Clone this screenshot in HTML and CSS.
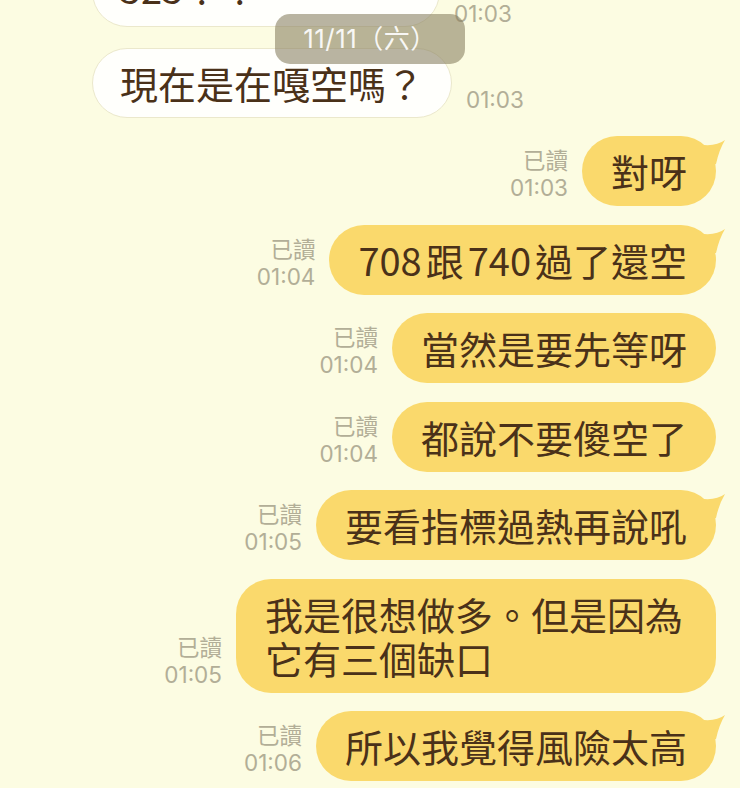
FILE: index.html
```html
<!DOCTYPE html>
<html lang="zh-Hant">
<head>
    <meta charset="UTF-8">
    <meta name="viewport" content="width=device-width, initial-scale=1.0">
    <title>聊天</title>
    <link rel="stylesheet" href="styles.css">
</head>
<body>
    <div class="chat">
        <div class="row">
            <div class="bubble theirs wide">525？？</div>
            <div class="meta">01:03</div>
        </div>
        <div class="row">
            <div class="bubble theirs">現在是在嘎空嗎？</div>
            <div class="meta">01:03</div>
        </div>

        <div class="row out">
            <div class="meta">已讀<br>01:03</div>
            <div class="bubble mine">對呀
                <svg class="tail" width="24" height="30" viewBox="0 0 24 30"><path d="M0 9 Q13 10 21 4 Q15 14 12 28 L0 28 Z"/></svg>
            </div>
        </div>
        <div class="row out">
            <div class="meta">已讀<br>01:04</div>
            <div class="bubble mine"><span class="num">708</span>跟<span class="num">740</span>過了還空
                <svg class="tail" width="24" height="30" viewBox="0 0 24 30"><path d="M0 9 Q13 10 21 4 Q15 14 12 28 L0 28 Z"/></svg>
            </div>
        </div>
        <div class="row out">
            <div class="meta">已讀<br>01:04</div>
            <div class="bubble mine">當然是要先等呀</div>
        </div>
        <div class="row out">
            <div class="meta">已讀<br>01:04</div>
            <div class="bubble mine">都說不要傻空了</div>
        </div>
        <div class="row out">
            <div class="meta">已讀<br>01:05</div>
            <div class="bubble mine">要看指標過熱再說吼
                <svg class="tail" width="24" height="30" viewBox="0 0 24 30"><path d="M0 9 Q13 10 21 4 Q15 14 12 28 L0 28 Z"/></svg>
            </div>
        </div>
        <div class="row out">
            <div class="meta">已讀<br>01:05</div>
            <div class="bubble mine">我是很想做多。但是因為它有三個缺口</div>
        </div>
        <div class="row out">
            <div class="meta">已讀<br>01:06</div>
            <div class="bubble mine">所以我覺得風險太高
                <svg class="tail" width="24" height="30" viewBox="0 0 24 30"><path d="M0 9 Q13 10 21 4 Q15 14 12 28 L0 28 Z"/></svg>
            </div>
        </div>
    </div>

    <div class="date-pill">11/11（六）</div>
</body>
</html>
```

FILE: styles.css
```css
body {
    margin: 0;
    height: 788px;
    overflow: hidden;
    position: relative;
    background: #fcfce2;
    font-family: Inter, "Noto Sans CJK TC", sans-serif;
}
.chat {
    display: flex;
    flex-direction: column;
    gap: 18.5px;
    margin-top: -43px;
    padding: 0 24px 0 92px;
}
.row {
    display: flex;
    align-items: flex-end;
    gap: 14px;
}
.row:first-child {
    margin-bottom: 2px;
}
.row:first-child .meta {
    margin-bottom: 0;
}
.row.out {
    justify-content: flex-end;
}
.bubble {
    position: relative;
    box-sizing: border-box;
    max-width: 480px;
    padding: 13px 29px;
    border-radius: 35px;
    font-family: "Noto Sans CJK TC", sans-serif;
    font-size: 38px;
    line-height: 44px;
    color: #4a3119;
}
.bubble.mine {
    background: #fad96c;
}
.bubble.theirs {
    background: #fffffc;
    border: 1px solid #ebe8cc;
    padding: 12px 27px;
}
.bubble.wide {
    width: 348px;
    padding: 8px 27px 16px;
}
.num {
    margin: 0 4px;
}
.num:first-child {
    margin-left: 0;
}
.tail {
    position: absolute;
    top: 0;
    right: -12px;
    fill: #fad96c;
}
.meta {
    margin-bottom: 5px;
    font-size: 22.5px;
    line-height: 27px;
    color: #b2ae97;
    text-align: right;
}
.date-pill {
    position: absolute;
    top: 14px;
    left: 275px;
    width: 190px;
    height: 50px;
    border-radius: 15px;
    background: rgba(135, 125, 95, 0.58);
    color: rgba(255, 255, 255, 0.92);
    font-size: 26px;
    letter-spacing: 0.5px;
    line-height: 50px;
    text-align: center;
}
```
